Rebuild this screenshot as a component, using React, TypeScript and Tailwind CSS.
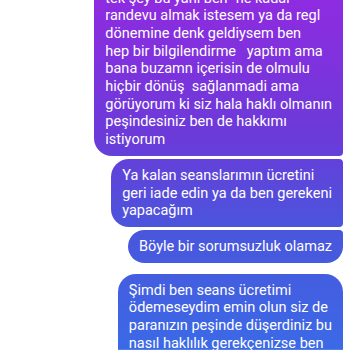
import React from 'react';

type Bubble = {
  id: number;
  lines: string[];
  corners: string;
  spaceAfter: string;
};

// Lines are broken the way the screenshot breaks them
const bubbles: Bubble[] = [
  {
    id: 1,
    lines: [
      'tek şey bu yani ben” ne kadar',
      'randevu almak istesem ya da regl',
      'dönemine denk geldiysem ben',
      'hep bir bilgilendirme   yaptım ama',
      'bana buzamn içerisin de olmulu',
      'hiçbir dönüş  sağlanmadi ama',
      'görüyorum ki siz hala haklı olmanın',
      'peşindesiniz ben de hakkımı',
      'istiyorum',
    ],
    corners: 'rounded-l-[18px] rounded-r-[4px]',
    spaceAfter: 'mb-[3px]',
  },
  {
    id: 2,
    lines: ['Ya kalan seanslarımın ücretini', 'geri iade edin ya da ben gerekeni', 'yapacağım'],
    corners: 'rounded-l-[18px] rounded-r-[4px]',
    spaceAfter: 'mb-[3px]',
  },
  {
    id: 3,
    lines: ['Böyle bir sorumsuzluk olamaz'],
    corners: 'rounded-l-[18px] rounded-tr-[4px] rounded-br-[18px]',
    spaceAfter: 'mb-[11px]',
  },
  {
    id: 4,
    lines: [
      'Şimdi ben seans ücretimi',
      'ödemeseydim emin olun siz de',
      'paranızın peşinde düşerdiniz bu',
      'nasıl haklılık gerekçenizse ben',
      'anlamadım',
    ],
    corners: 'rounded-l-[18px] rounded-tr-[18px] rounded-br-[4px]',
    spaceAfter: '',
  },
];

export default function App() {
  return (
    <div className="w-[350px] h-[350px] overflow-hidden bg-white font-['Roboto',sans-serif]">
      <div className="flex flex-col items-end pr-[7px] mt-[-18px]">
        {bubbles.map((b) => (
          <div
            key={b.id}
            className={`${b.corners} ${b.spaceAfter} px-[11px] py-[7.5px] text-white text-[14.5px] leading-[17.7px] bg-fixed bg-[linear-gradient(to_bottom,#8e2be0,#6a3bd9_40%,#4a55dc_65%,#3b6ae6)]`}
          >
            {b.lines.map((line, i) => (
              <div key={i} className="whitespace-pre">
                {line}
              </div>
            ))}
          </div>
        ))}
      </div>
    </div>
  );
}
